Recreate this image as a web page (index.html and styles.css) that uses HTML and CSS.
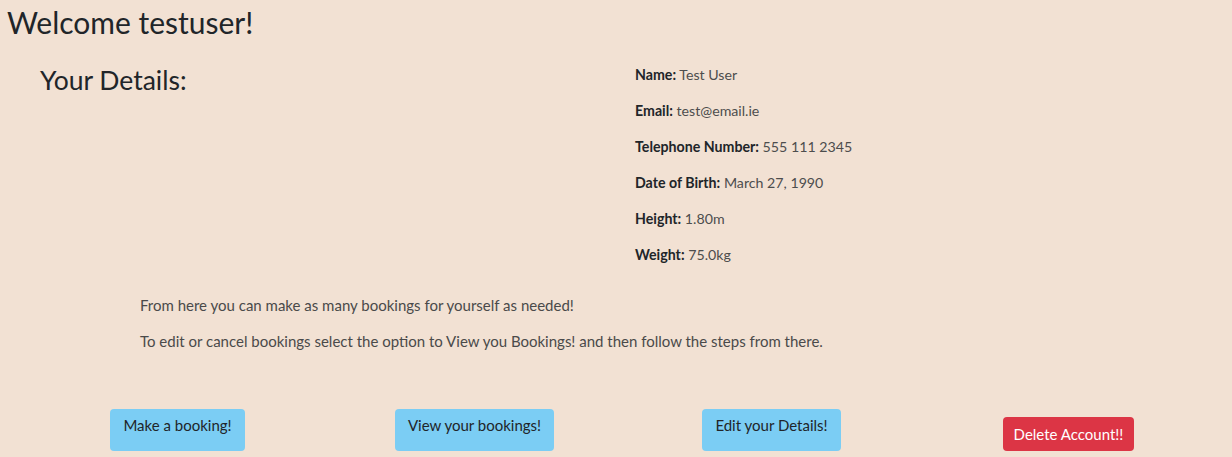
FILE: index.html
```html
<!DOCTYPE html>
<html lang="en">
<head>
<meta charset="utf-8">
<title>Profile</title>
<link rel="stylesheet" href="styles.css">
</head>
<body>
<h1 class="welcome">Welcome testuser!</h1>
<div class="details-row">
  <div class="col-left">
    <h3 class="details-title">Your Details:</h3>
  </div>
  <div class="col-right">
    <p class="detail"><strong>Name:</strong> Test User</p>
    <p class="detail"><strong>Email:</strong> test@email.ie</p>
    <p class="detail"><strong>Telephone Number:</strong> 555 111 2345</p>
    <p class="detail"><strong>Date of Birth:</strong> March 27, 1990</p>
    <p class="detail"><strong>Height:</strong> 1.80m</p>
    <p class="detail"><strong>Weight:</strong> 75.0kg</p>
  </div>
</div>
<div class="info">
  <p>From here you can make as many bookings for yourself as needed!</p>
  <p>To edit or cancel bookings select the option to View you Bookings! and then follow the steps from there.</p>
</div>
<div class="actions">
  <div class="action"><a class="btn btn-blue" href="#">Make a booking!</a></div>
  <div class="action"><a class="btn btn-blue" href="#">View your bookings!</a></div>
  <div class="action"><a class="btn btn-blue" href="#">Edit your Details!</a></div>
  <div class="action"><a class="btn btn-red" href="#">Delete Account!!</a></div>
</div>
</body>
</html>
```
FILE: styles.css
```css
html, body {
  margin: 0;
  padding: 0;
}
body {
  background: #f2e1d3;
  font-family: "Lato", "Noto Sans", sans-serif;
  color: #212529;
  font-size: 14px;
  height: 457px;
  overflow: hidden;
}
.welcome {
  font-weight: 400;
  font-size: 30px;
  line-height: 38px;
  margin: 3px 0 0 7px;
}
.details-row {
  display: grid;
  grid-template-columns: 635px 1fr;
  margin-top: 25px;
}
.col-left {
  padding-left: 40px;
}
.details-title {
  font-weight: 400;
  font-size: 26.5px;
  line-height: 30px;
  margin: -1px 0 0 0;
}
.col-right {
  display: flex;
  flex-direction: column;
  gap: 19px;
}
.detail {
  margin: 0;
  line-height: 17px;
  color: #4d4d4d;
  font-size: 14.2px;
}
.detail strong {
  color: #212529;
  font-weight: 700;
}
.info {
  padding-left: 140px;
  margin-top: 33px;
  color: #4a4a4a;
  font-size: 15px;
}
.info p {
  margin: 0 0 18px 0;
  line-height: 18px;
}
.actions {
  display: grid;
  grid-template-columns: repeat(4, 297px);
  padding-left: 29px;
  margin-top: 59px;
  align-items: end;
}
.action {
  display: flex;
  justify-content: center;
}
.btn {
  display: inline-block;
  text-decoration: none;
  border-radius: 4px;
  font-size: 15px;
}
.btn-blue {
  background: #7bcdf4;
  color: #212529;
  padding: 7px 13px 17px 13px;
  line-height: 18px;
}
.btn-red {
  background: #dc3545;
  color: #fff;
  padding: 8px 11px;
  line-height: 18px;
}
```
